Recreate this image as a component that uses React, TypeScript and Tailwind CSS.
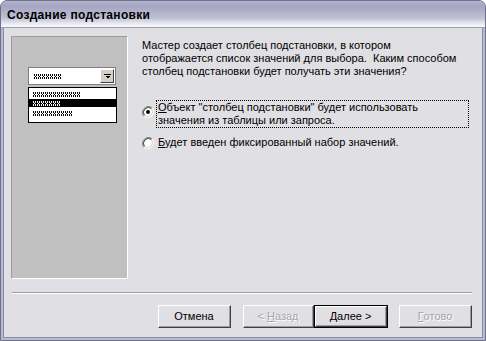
import React from "react";

function Hatch({ w, color, id }: { w: number; color: string; id: string }) {
  return (
    <svg width={w} height={5} shapeRendering="crispEdges" className="block">
      <defs>
        <pattern id={id} width="4" height="5" patternUnits="userSpaceOnUse">
          <rect x="0" y="0" width="1" height="1" fill={color} />
          <rect x="2" y="0" width="1" height="1" fill={color} />
          <rect x="0" y="1" width="1" height="1" fill={color} />
          <rect x="2" y="1" width="1" height="1" fill={color} />
          <rect x="1" y="2" width="1" height="1" fill={color} />
          <rect x="0" y="3" width="1" height="1" fill={color} />
          <rect x="2" y="3" width="1" height="1" fill={color} />
          <rect x="0" y="4" width="1" height="1" fill={color} />
          <rect x="2" y="4" width="1" height="1" fill={color} />
        </pattern>
      </defs>
      <rect width={w} height={5} fill={`url(#${id})`} />
    </svg>
  );
}

function Radio({ checked }: { checked?: boolean }) {
  return (
    <svg width="12" height="12" viewBox="0 0 12 12" className="shrink-0">
      <circle cx="6" cy="6" r="5" fill="#fff" />
      <path d="M10.2 1.8 A6 6 0 0 0 1.8 10.2" stroke="#808080" strokeWidth="1" fill="none" />
      <path d="M9.5 2.5 A5 5 0 0 0 2.5 9.5" stroke="#404040" strokeWidth="1" fill="none" />
      <path d="M1.8 10.2 A6 6 0 0 0 10.2 1.8" stroke="#ffffff" strokeWidth="1" fill="none" />
      <path d="M2.5 9.5 A5 5 0 0 0 9.5 2.5" stroke="#d4d0c8" strokeWidth="1" fill="none" />
      {checked && <circle cx="6" cy="6" r="2" fill="#000" />}
    </svg>
  );
}

function Btn({
  children,
  disabled,
  def,
  w,
}: {
  children: React.ReactNode;
  disabled?: boolean;
  def?: boolean;
  w: string;
}) {
  const face = (
    <div className="h-full w-full border-t border-l border-t-white border-l-white border-r border-b border-r-[#404040] border-b-[#404040]">
      <div
        className={`flex h-full w-full items-center justify-center border-r border-b border-r-[#9d9da1] border-b-[#9d9da1] bg-[#e0dfe3] text-[11px] ${
          disabled ? "text-[#a7a6aa] [text-shadow:1px_1px_0_#fff]" : "text-black"
        }`}
      >
        {children}
      </div>
    </div>
  );
  if (def) {
    return <div className={`${w} h-[23px] border border-black`}>{face}</div>;
  }
  return <div className={`${w} h-[23px]`}>{face}</div>;
}

export default function App() {
  return (
    <div className="h-[341px] w-[486px] overflow-hidden rounded-t-[7px] border border-[#6f6f8e] bg-[#b9b9d0] font-['Liberation_Sans',Arial,sans-serif]">
      {/* title bar */}
      <div className="flex h-[27px] items-center border-b border-[#9a9ab2] bg-[linear-gradient(to_bottom,#b3b3cc_0%,#a5a5c2_20%,#bfbfd4_65%,#e6e6ee_85%,#fafafc_100%)] pl-[6px]">
        <span className="mt-[2px] text-[12px] font-bold tracking-[0.3px] text-black">Создание подстановки</span>
      </div>

      {/* body */}
      <div className="mx-[2px] flex h-[310px] flex-col border-x border-b border-[#8c8ca8] bg-[#e0dfe3]">
        <div className="flex pt-[8px] pl-[7px]">
          {/* picture panel */}
          <div className="relative h-[243px] w-[117px] shrink-0 border-t border-l border-t-[#9d9da1] border-l-[#9d9da1] border-r border-b border-r-white border-b-white bg-[#c0c0c0]">
            <div className="absolute left-[16px] top-[30px] w-[89px]">
              {/* combo */}
              <div className="flex h-[18px] w-[88px] items-stretch border border-[#808080] bg-white">
                <div className="flex flex-1 items-center pl-[5px]">
                  <Hatch w={27} color="#000" id="h0" />
                </div>
                <div className="my-[1px] mr-[1px] flex w-[14px] items-center justify-center border-t border-l border-t-white border-l-white border-r border-b border-r-[#404040] border-b-[#404040] bg-[#d4d0c8]">
                  <svg width="7" height="5" viewBox="0 0 7 5" shapeRendering="crispEdges">
                    <rect x="0" y="0" width="7" height="1" fill="#000" />
                    <path d="M1 2 H6 L3.5 4.5 Z" fill="#000" />
                  </svg>
                </div>
              </div>
              {/* list */}
              <div className="mt-[2px] flex h-[36px] w-[89px] flex-col border border-black bg-white pt-[4px]">
                <div className="pl-[4px]">
                  <Hatch w={48} color="#000" id="h1" />
                </div>
                <div className="mt-[2px] flex h-[8px] items-center bg-black pl-[4px]">
                  <Hatch w={28} color="#fff" id="h2" />
                </div>
                <div className="mt-[4px] pl-[4px]">
                  <Hatch w={40} color="#000" id="h3" />
                </div>
              </div>
            </div>
          </div>

          {/* right content */}
          <div className="ml-[14px] flex flex-col text-[11px] leading-[13px] text-black">
            <p className="mt-[3px]">
              Мастер создает столбец подстановки, в котором
              <br />
              отображается список значений для выбора.&nbsp; Каким способом
              <br />
              столбец подстановки будет получать эти значения?
            </p>

            <div className="mt-[22px] flex items-start">
              <div className="mt-[6px]">
                <Radio checked />
              </div>
              <div className="ml-[2px] w-[313px] border border-dotted border-black px-[1px]">
                <u>О</u>бъект "столбец подстановки" будет использовать
                <br />
                значения из таблицы или запроса.
              </div>
            </div>

            <div className="mt-[8px] flex items-center">
              <Radio />
              <div className="ml-[4px]">
                <u>Б</u>удет введен фиксированный набор значений.
              </div>
            </div>
          </div>
        </div>

        {/* separator */}
        <div className="mt-[13px] ml-[8px] mr-[10px] border-t border-b border-t-[#9d9da1] border-b-white" />

        {/* buttons */}
        <div className="mt-[11px] flex justify-end pr-[10px]">
          <Btn w="w-[73px]">Отмена</Btn>
          <div className="ml-[12px] flex">
            <Btn w="w-[71px]" disabled>
              &lt; <u className="ml-[3px]">Н</u>азад
            </Btn>
            <Btn w="w-[74px]" def>
              <u>Д</u>алее &gt;
            </Btn>
          </div>
          <div className="ml-[11px]">
            <Btn w="w-[73px]" disabled>
              <u>Г</u>отово
            </Btn>
          </div>
        </div>
      </div>
    </div>
  );
}
